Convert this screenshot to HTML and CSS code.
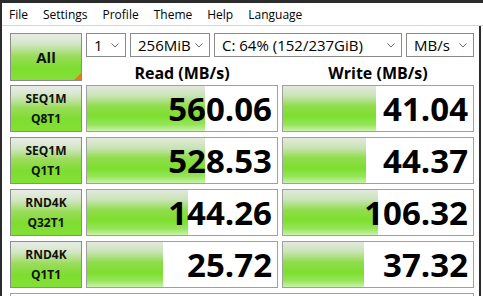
FILE: index.html
```html
<!DOCTYPE html>
<html>
<head>
<meta charset="utf-8">
<link rel="stylesheet" href="styles.css">
</head>
<body>
<div class="window">
  <nav class="menubar">
    <span>File</span><span>Settings</span><span>Profile</span><span>Theme</span><span>Help</span><span>Language</span>
  </nav>
  <main class="panel">
    <div class="top">
      <button class="all">All</button>
      <div class="controls">
        <div class="combos">
          <div class="combo c-count"><span>1</span><svg class="chev" viewBox="0 0 8 5"><polyline points="0.5,0.5 4,4 7.5,0.5"/></svg></div>
          <div class="combo c-size"><span>256MiB</span><svg class="chev" viewBox="0 0 8 5"><polyline points="0.5,0.5 4,4 7.5,0.5"/></svg></div>
          <div class="combo c-drive"><span>C: 64% (152/237GiB)</span><svg class="chev" viewBox="0 0 8 5"><polyline points="0.5,0.5 4,4 7.5,0.5"/></svg></div>
          <div class="combo c-unit"><span>MB/s</span><svg class="chev" viewBox="0 0 8 5"><polyline points="0.5,0.5 4,4 7.5,0.5"/></svg></div>
        </div>
        <div class="heads">
          <div>Read (MB/s)</div>
          <div>Write (MB/s)</div>
        </div>
      </div>
    </div>

    <div class="row">
      <div class="label">SEQ1M<br>Q8T1</div>
      <div class="cell" style="--w:118px">560.06</div>
      <div class="cell" style="--w:93px">41.04</div>
    </div>
    <div class="row">
      <div class="label">SEQ1M<br>Q1T1</div>
      <div class="cell" style="--w:118px">528.53</div>
      <div class="cell" style="--w:83px">44.37</div>
    </div>
    <div class="row">
      <div class="label">RND4K<br>Q32T1</div>
      <div class="cell" style="--w:101px">144.26</div>
      <div class="cell" style="--w:95px">106.32</div>
    </div>
    <div class="row">
      <div class="label">RND4K<br>Q1T1</div>
      <div class="cell" style="--w:76px">25.72</div>
      <div class="cell" style="--w:81px">37.32</div>
    </div>
    <div class="comment"></div>
  </main>
</div>
</body>
</html>
```

FILE: styles.css
```css
html, body {
  margin: 0;
  padding: 0;
  background: #ffffff;
}
body {
  width: 483px;
  height: 296px;
  overflow: hidden;
  font-family: "Open Sans", "Noto Sans", sans-serif;
  color: #000;
}
.window {
  border-top: 3px solid #2b2b2b;
  border-left: 2px solid #2b2b2b;
  height: 296px;
  box-sizing: border-box;
  display: flex;
  flex-direction: column;
}
.menubar {
  display: flex;
  align-items: center;
  gap: 15px;
  height: 22px;
  padding-left: 7px;
  border-bottom: 1px solid #d6d6d6;
  font-size: 12px;
  color: #000;
  background: #fff;
}
.panel {
  width: 479px;
  box-sizing: border-box;
  border-right: 2px solid #2b2b2b;
  flex: 1;
  padding: 7px 0 0 8px;
  overflow: hidden;
}
.top {
  display: grid;
  grid-template-columns: 72px 388px;
  column-gap: 4px;
  height: 48px;
}
.all {
  position: relative;
  width: 72px;
  height: 48px;
  margin: 0;
  padding: 0;
  border: 1px solid #8c8c8c;
  font-family: "Open Sans", sans-serif;
  font-weight: 700;
  font-size: 15px;
  color: #111;
  background: linear-gradient(#e9ece7 0%, #d3e6c6 22%, #9bdc5c 48%, #7edd30 72%, #84e036 100%);
}
.all::after {
  content: "";
  position: absolute;
  right: 0;
  bottom: 0;
  border-style: solid;
  border-width: 0 0 7px 7px;
  border-color: transparent transparent #ea7a1e transparent;
}
.controls {
  display: flex;
  flex-direction: column;
}
.combos {
  display: flex;
  gap: 4px;
  height: 24px;
}
.combo {
  box-sizing: border-box;
  height: 24px;
  border: 1px solid #8a8a8a;
  background: #fff;
  display: flex;
  align-items: center;
  justify-content: space-between;
  padding: 0 6px 0 7px;
  font-size: 15px;
  color: #000;
}
.c-count { width: 40px; }
.c-size { width: 80px; }
.c-drive { width: 188px; }
.c-unit { width: 68px; }
.chev {
  width: 8px;
  height: 5px;
  fill: none;
  stroke: #6a6a6a;
  stroke-width: 1;
}
.heads {
  display: grid;
  grid-template-columns: 192px 192px;
  column-gap: 4px;
  padding-top: 6px;
  line-height: 20px;
  font-size: 16px;
  font-weight: 700;
  text-align: center;
}
.row {
  display: grid;
  grid-template-columns: 72px 192px 192px;
  column-gap: 4px;
  height: 47px;
  margin-top: 5px;
}
.top + .row {
  margin-top: 4px;
}
.label {
  box-sizing: border-box;
  border: 1px solid #8c8c8c;
  display: flex;
  align-items: center;
  justify-content: center;
  text-align: center;
  font-size: 12px;
  font-weight: 700;
  line-height: 20px;
  color: #111;
  background: linear-gradient(#e9ece7 0%, #d3e6c6 22%, #9bdc5c 48%, #7edd30 72%, #84e036 100%);
}
.cell {
  box-sizing: border-box;
  border: 1px solid #a0a0a0;
  display: flex;
  align-items: center;
  justify-content: flex-end;
  padding-right: 5px;
  font-size: 33px;
  font-weight: 700;
  line-height: 40px;
  color: #000;
  background: linear-gradient(#e3e8df 0%, #c9e4b4 22%, #90dc4c 45%, #7ddf2e 68%, #96e55c 86%, #cbf1aa 100%) no-repeat;
  background-size: var(--w) 100%;
  background-color: #fff;
}
.comment {
  margin-top: 5px;
  width: 464px;
  height: 20px;
  border: 1px solid #a0a0a0;
  box-sizing: border-box;
}
```
